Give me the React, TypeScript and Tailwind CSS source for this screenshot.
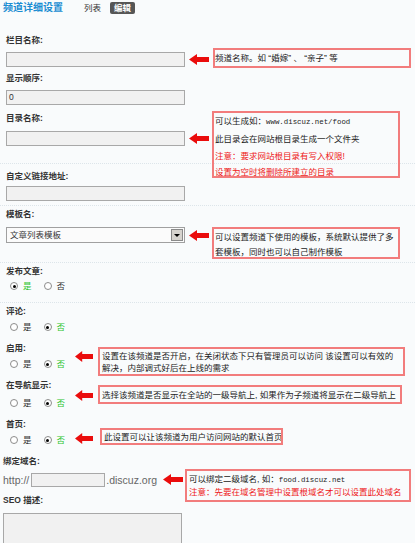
import type { ReactNode } from 'react';

function Arrow({ className = '', w = 20 }: { className?: string; w?: number }) {
  return (
    <svg width={w} height="11" viewBox="0 0 20 11" preserveAspectRatio="none" className={className}>
      <polygon points="0,5.5 8,0 8,3 20,3 20,8 8,8 8,11" fill="#ea0c0c" />
    </svg>
  );
}

function Note({ className, children }: { className: string; children: ReactNode }) {
  return (
    <div className={`absolute border-2 border-[#f27c7c] text-[#222] whitespace-nowrap overflow-hidden ${className}`}>
      {children}
    </div>
  );
}

function Radio({ on }: { on: boolean }) {
  return (
    <span className="flex w-[8px] h-[8px] shrink-0 items-center justify-center rounded-full border border-[#8c8c8c] bg-white">
      {on && <span className="w-[3px] h-[3px] rounded-full bg-black" />}
    </span>
  );
}

function Choice({ yes, className, children }: { yes: boolean; className: string; children?: ReactNode }) {
  return (
    <div className={`relative flex items-center h-[14px] pl-[4px] ${className}`}>
      <Radio on={yes} />
      <span className={`ml-[5px] ${yes ? 'text-[#2ec52e]' : ''}`}>是</span>
      <span className="ml-[12px]">
        <Radio on={!yes} />
      </span>
      <span className={`ml-[5px] ${yes ? '' : 'text-[#2ec52e]'}`}>否</span>
      {children}
    </div>
  );
}

function Label({ className, children }: { className: string; children: ReactNode }) {
  return <div className={`font-bold h-[14px] ${className}`}>{children}</div>;
}

function Input({ children }: { children?: ReactNode }) {
  return (
    <div className="w-[179px] h-[15px] shrink-0 border border-[#a8a8a8] bg-[#f1f1f1] pl-[2px] leading-[13px]">
      {children}
    </div>
  );
}

function Dots({ className }: { className: string }) {
  return <div className={`-ml-[6px] border-t border-dotted border-[#dde5ea] ${className}`} />;
}

export default function App() {
  return (
    <div className="w-[415px] h-[543px] overflow-hidden bg-[#f9fbfc] text-[#333] text-[8.5px] leading-[14px] font-['Liberation_Sans','Noto_Sans_CJK_SC',sans-serif]">
      {/* header */}
      <div className="flex items-center h-[14px] mt-px pl-[3px]">
        <span className="text-[10px] font-bold text-[#1b8dd2]">频道详细设置</span>
        <span className="ml-[21px]">列表</span>
        <span className="ml-[9px] rounded-[2px] bg-[#565656] px-[4px] font-bold leading-[12px] text-white">编辑</span>
      </div>

      <div className="pl-[6px]">
        <Label className="mt-[18px]">栏目名称:</Label>
        <div className="relative mt-[5px] flex items-center h-[15px]">
          <Input />
          <Arrow className="ml-[4px]" />
          <Note className="left-[207px] top-[-4px] w-[198px] h-[20px] flex items-center">
            频道名称。如 “婚嫁” 、 “亲子” 等
          </Note>
        </div>

        <Label className="mt-[4px]">显示顺序:</Label>
        <div className="mt-[5px] flex h-[15px]">
          <Input>0</Input>
        </div>

        <Label className="mt-[6px]">目录名称:</Label>
        <div className="relative mt-[6px] flex items-center h-[15px]">
          <Input />
          <Arrow className="ml-[4px]" />
          <Note className="left-[206px] top-[-20px] w-[188px] h-[67px] pl-[1px] leading-[16.8px]">
            <div>
              可以生成如：<span className="font-['Liberation_Mono',monospace] text-[7.4px]">www.discuz.net/food</span>
            </div>
            <div>此目录会在网站根目录生成一个文件夹</div>
            <div className="text-[#ee2020]">注意：要求网站根目录有写入权限!</div>
            <div className="text-[#ee2020]">设置为空时将删除所建立的目录</div>
          </Note>
        </div>

        <Dots className="mt-[17px]" />
        <Label className="mt-[5px]">自定义链接地址:</Label>
        <div className="mt-[3px] flex h-[15px]">
          <Input />
        </div>

        <Dots className="mt-[4px]" />
        <Label className="mt-[1px]">模板名:</Label>
        <div className="relative mt-[6px] flex items-center h-[16px]">
          <div className="flex w-[179px] h-[16px] items-center border border-[#a0a0a0] bg-[#fbfbfb]">
            <span className="flex-1 pl-[3px]">文章列表模板</span>
            <span className="mr-px flex w-[12px] h-[12px] items-center justify-center border border-[#8a8a8a] bg-[#d6d3ce]">
              <span className="border-x-[3px] border-t-[3px] border-x-transparent border-t-black" />
            </span>
          </div>
          <Arrow className="ml-[4px]" />
          <Note className="left-[206px] top-0 w-[188px] h-[32px] pl-[1px] pt-px leading-[15.3px]">
            <div>可以设置频道下使用的模板，系统默认提供了多</div>
            <div>套模板，同时也可以自己制作模板</div>
          </Note>
        </div>

        <Dots className="mt-[19px]" />
        <Label className="mt-[1px]">发布文章:</Label>
        <Choice yes className="mt-[1px]" />

        <Dots className="mt-[9px]" />
        <Label className="mt-[1px]">评论:</Label>
        <Choice yes={false} className="mt-[2px]" />

        <Label className="mt-[7px]">启用:</Label>
        <Choice yes={false} className="mt-[2px]">
          <Arrow w={18} className="absolute left-[69px] top-[-6px]" />
          <Note className="left-[92px] top-[-10px] w-[307px] h-[29px] pl-[2px] pt-px leading-[12.3px]">
            <div>设置在该频道是否开启，在关闭状态下只有管理员可以访问 该设置可以有效的</div>
            <div>解决，内部调式好后在上线的需求</div>
          </Note>
        </Choice>

        <Label className="mt-[7px]">在导航显示:</Label>
        <Choice yes={false} className="mt-[4px]">
          <Arrow w={18} className="absolute left-[69px] top-[-6px]" />
          <Note className="left-[92px] top-[-11px] w-[304px] h-[19px] pl-[2px] flex items-center">
            选择该频道是否显示在全站的一级导航上, 如果作为子频道将显示在二级导航上
          </Note>
        </Choice>

        <Label className="mt-[7px]">首页:</Label>
        <Choice yes={false} className="mt-[2px]">
          <Arrow w={18} className="absolute left-[69px] top-0" />
          <Note className="left-[94px] top-[-5px] w-[183px] h-[17px] pl-[2px] flex items-center">
            此设置可以让该频道为用户访问网站的默认首页
          </Note>
        </Choice>
      </div>

      <div className="pl-[3px]">
        <Label className="mt-[7px]">绑定域名:</Label>
        <div className="relative mt-[5px] flex items-center h-[14px] text-[10.5px] text-[#666]">
          <span>http://</span>
          <div className="ml-[2px] w-[74px] h-[14px] border border-[#a8a8a8] bg-[#f1f1f1]" />
          <span className="ml-px">.discuz.org</span>
          <Arrow className="absolute left-[160px] top-[1px]" />
          <Note className="left-[182px] top-[-4px] w-[226px] h-[33px] pl-[2px] pt-[2px] text-[8.5px] leading-[12.4px]">
            <div>
              可以绑定二级域名, 如：<span className="font-['Liberation_Mono',monospace] text-[7.4px]">food.discuz.net</span>
            </div>
            <div className="text-[#ee2020]">注意：先要在域名管理中设置根域名才可以设置此处域名</div>
          </Note>
        </div>

        <Label className="mt-[6px]">SEO 描述:</Label>
        <div className="mt-[6px] w-[179px] h-[60px] border border-[#a8a8a8] bg-[#f1f1f1]" />
      </div>
    </div>
  );
}
